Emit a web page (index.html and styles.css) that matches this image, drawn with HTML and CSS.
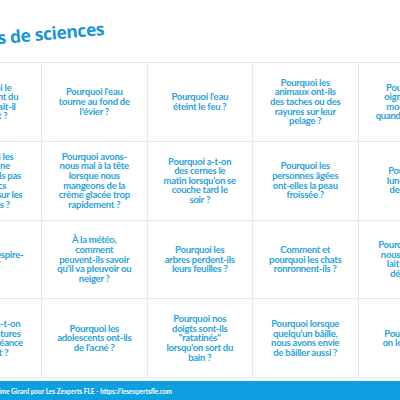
FILE: index.html
```html
<!DOCTYPE html>
<html lang="fr">
<head>
    <meta charset="UTF-8">
    <meta name="viewport" content="width=device-width, initial-scale=1.0">
    <title>Questions de sciences</title>
    <link rel="stylesheet" href="styles.css">
</head>
<body>
    <header class="page-header">
        <div class="title-box">
            <h1 class="title">Questions de sciences</h1>
        </div>
    </header>

    <main class="board">
        <div class="card">Pourquoi le<br>claquement du<br>"ballon" fait-il<br>du bruit ?</div>
        <div class="card">Pourquoi l'eau<br>tourne au fond de<br>l'évier ?</div>
        <div class="card">Pourquoi l'eau<br>éteint le feu ?</div>
        <div class="card">Pourquoi les<br>animaux ont-ils<br>des taches ou des<br>rayures sur leur<br>pelage ?</div>
        <div class="card">Pourquoi les<br>oignons nous<br>mouillent-ils<br>quand on coupe ?</div>

        <div class="card">Pourquoi les<br>oiseaux ne<br>reçoivent-ils pas<br>de chocs<br>électrique sur les<br>fils froids ?</div>
        <div class="card">Pourquoi avons-<br>nous mal à la tête<br>lorsque nous<br>mangeons de la<br>crème glacée trop<br>rapidement ?</div>
        <div class="card">Pourquoi a-t-on<br>des cernes le<br>matin lorsqu'on se<br>couche tard le<br>soir ?</div>
        <div class="card">Pourquoi les<br>personnes âgées<br>ont-elles la peau<br>froissée ?</div>
        <div class="card">Pourquoi la<br>lune change<br>de forme ?</div>

        <div class="card">Pourquoi respire-<br>t-on ?</div>
        <div class="card">À la météo,<br>comment<br>peuvent-ils savoir<br>qu'il va pleuvoir ou<br>neiger ?</div>
        <div class="card">Pourquoi les<br>arbres perdent-ils<br>leurs feuilles ?</div>
        <div class="card">Comment et<br>pourquoi les chats<br>ronronnent-ils ?</div>
        <div class="card">Pourquoi avons-<br>nous besoin de<br>lait au petit-<br>déjeuner ?</div>

        <div class="card">Pourquoi a-t-on<br>des courbatures<br>après une séance<br>de sport ?</div>
        <div class="card">Pourquoi les<br>adolescents ont-ils<br>de l'acné ?</div>
        <div class="card">Pourquoi nos<br>doigts sont-ils<br>"ratatinés"<br>lorsqu'on sort du<br>bain ?</div>
        <div class="card">Pourquoi lorsque<br>quelqu'un bâille,<br>nous avons envie<br>de bâiller aussi ?</div>
        <div class="card">Pourquoi a-t-<br>on le hoquet ?</div>
    </main>

    <footer class="page-footer">
        <div class="credit">
            <span>Fiches créées par Maxime Girard pour Les Zexperts FLE - https://lesexpertsfle.com</span>
        </div>
    </footer>
</body>
</html>
```

FILE: styles.css
```css
* {
    margin: 0;
    padding: 0;
    box-sizing: border-box;
}

body {
    font-family: Lato, "Open Sans", "Liberation Sans", sans-serif;
    background: #ffffff;
    width: 400px;
    height: 400px;
    overflow: hidden;
}

/* titre */
.page-header {
    height: 62px;
    padding-top: 16px;
}

.title-box {
    width: 104px;
    display: flex;
    justify-content: flex-end;
    transform: rotate(-5deg);
    transform-origin: right center;
}

.title {
    font-family: "Open Sans", Lato, sans-serif;
    font-size: 17.5px;
    font-weight: 700;
    color: #1c94d3;
    white-space: nowrap;
    letter-spacing: -0.4px;
}

/* grille des questions */
.board {
    display: grid;
    grid-template-columns: repeat(5, 105.5px);
    grid-auto-rows: 78.75px;
    margin-left: -63.5px;
    border-top: 1px solid #d8ebf4;
}

.card {
    display: flex;
    align-items: center;
    justify-content: center;
    text-align: center;
    padding: 0 4px;
    border-right: 1px solid #d8ebf4;
    border-bottom: 1px solid #d8ebf4;
    color: #2aa2d9;
    font-size: 9.5px;
    font-weight: 700;
    line-height: 9.6px;
    letter-spacing: -0.25px;
    white-space: nowrap;
}

/* bas de page */
.page-footer {
    margin-top: 3px;
    height: 20px;
    background: #0d9fe0;
    display: flex;
    align-items: center;
}

.credit {
    width: 172px;
    display: flex;
    justify-content: flex-end;
}

.credit span {
    color: #ffffff;
    font-size: 6.5px;
    font-weight: 700;
    white-space: nowrap;
}
```
